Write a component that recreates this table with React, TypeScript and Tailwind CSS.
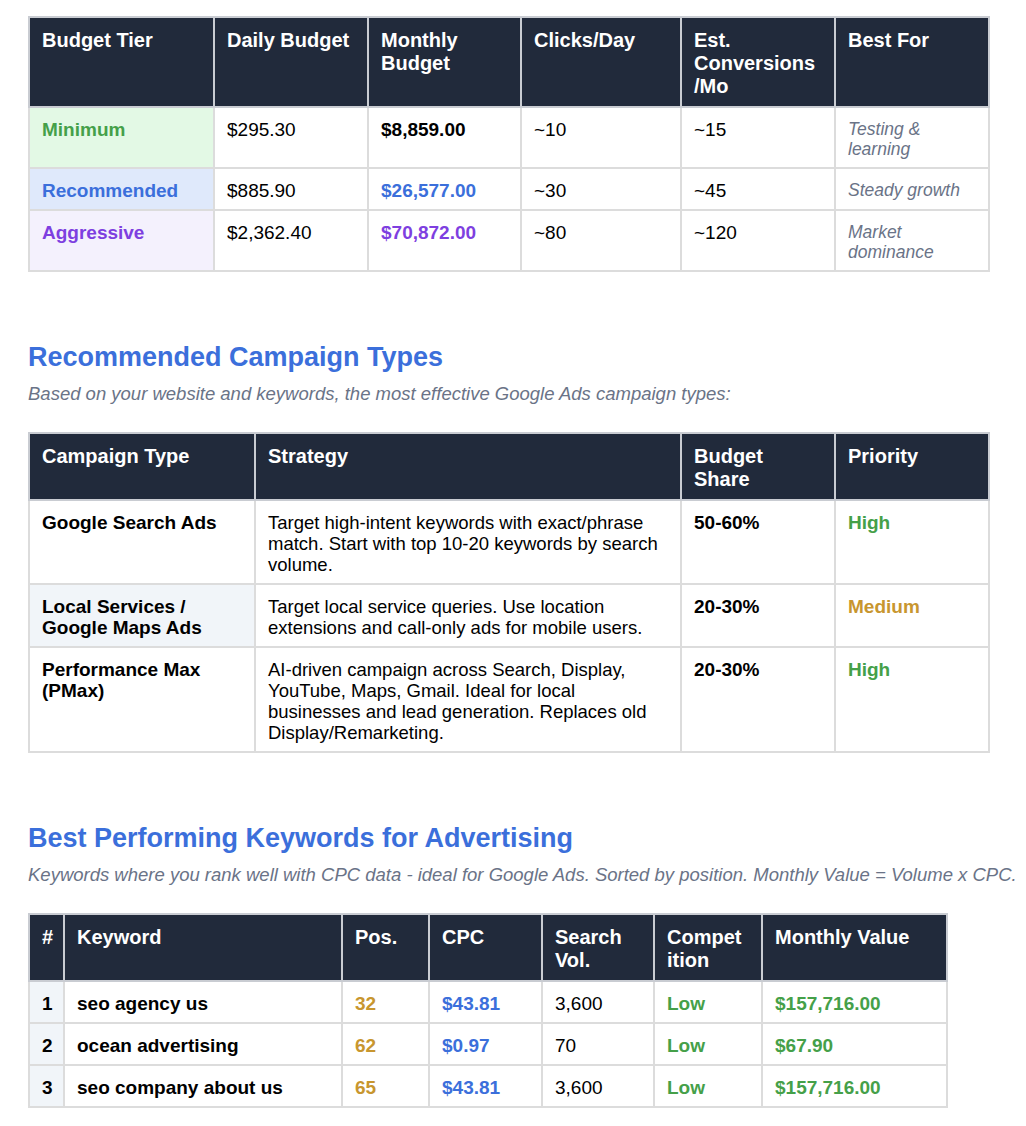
import React from 'react';

const th = 'bg-[#212a3b] text-white font-bold text-[20px] leading-[23px] text-left align-top pl-3 pr-[14px] pt-[11px] pb-[8px] border-2 border-[#c9ccd2]';
const td = 'text-[19px] leading-[21px] align-top pl-3 pr-2 pt-[11px] pb-[8px] border-2 border-[#dcdcdc]';

const tiers = [
  { name: 'Minimum', nameCls: 'text-[#45a049] bg-[#e3f9e5]', daily: '$295.30', monthly: '$8,859.00', monthlyCls: 'text-black', clicks: '~10', conv: '~15', best: 'Testing & learning' },
  { name: 'Recommended', nameCls: 'text-[#3b6fdb] bg-[#dfe9fb]', daily: '$885.90', monthly: '$26,577.00', monthlyCls: 'text-[#3b6fdb]', clicks: '~30', conv: '~45', best: 'Steady growth' },
  { name: 'Aggressive', nameCls: 'text-[#7e3fe0] bg-[#f4f1fd]', daily: '$2,362.40', monthly: '$70,872.00', monthlyCls: 'text-[#7e3fe0]', clicks: '~80', conv: '~120', best: 'Market dominance' },
];

const campaigns = [
  { type: 'Google Search Ads', strategy: 'Target high-intent keywords with exact/phrase match. Start with top 10-20 keywords by search volume.', share: '50-60%', priority: 'High', shaded: false },
  { type: 'Local Services / Google Maps Ads', strategy: 'Target local service queries. Use location extensions and call-only ads for mobile users.', share: '20-30%', priority: 'Medium', shaded: true },
  { type: 'Performance Max (PMax)', strategy: 'AI-driven campaign across Search, Display, YouTube, Maps, Gmail. Ideal for local businesses and lead generation. Replaces old Display/Remarketing.', share: '20-30%', priority: 'High', shaded: false },
];

const keywords = [
  { n: 1, kw: 'seo agency us', pos: '32', cpc: '$43.81', vol: '3,600', comp: 'Low', value: '$157,716.00' },
  { n: 2, kw: 'ocean advertising', pos: '62', cpc: '$0.97', vol: '70', comp: 'Low', value: '$67.90' },
  { n: 3, kw: 'seo company about us', pos: '65', cpc: '$43.81', vol: '3,600', comp: 'Low', value: '$157,716.00' },
];

const priorityColor: Record<string, string> = {
  High: 'text-[#45a049]',
  Medium: 'text-[#c8962f]',
};

function SectionHead({ title, sub }: { title: string; sub: string }) {
  return (
    <div className="mt-[70px] mb-[28px]">
      <h2 className="text-[27px] leading-[30px] font-bold text-[#3b6fdb]">{title}</h2>
      <p className="mt-[11px] text-[18.5px] leading-[21px] italic text-[#6a7387] whitespace-nowrap">{sub}</p>
    </div>
  );
}

export default function App() {
  return (
    <div className="min-h-screen bg-white pt-[16px] pl-[28px] text-black" style={{ fontFamily: '"Liberation Sans", Arial, sans-serif' }}>
      {/* Budget tiers */}
      <table className="table-fixed border-collapse w-[960px]">
        <colgroup>
          <col className="w-[185px]" />
          <col className="w-[154px]" />
          <col className="w-[153px]" />
          <col className="w-[160px]" />
          <col className="w-[154px]" />
          <col className="w-[154px]" />
        </colgroup>
        <thead>
          <tr>
            <th className={`${th} !pb-[9px]`}>Budget Tier</th>
            <th className={th}>Daily Budget</th>
            <th className={th}>Monthly Budget</th>
            <th className={th}>Clicks/Day</th>
            <th className={th}>Est. Conversions /Mo</th>
            <th className={th}>Best For</th>
          </tr>
        </thead>
        <tbody>
          {tiers.map((t) => (
            <tr key={t.name}>
              <td className={`${td} font-bold ${t.nameCls}`}>{t.name}</td>
              <td className={td}>{t.daily}</td>
              <td className={`${td} font-bold ${t.monthlyCls}`}>{t.monthly}</td>
              <td className={td}>{t.clicks}</td>
              <td className={td}>{t.conv}</td>
              <td className={`${td} !text-[17.5px] !leading-[20px] italic text-[#6a7387]`}>{t.best}</td>
            </tr>
          ))}
        </tbody>
      </table>

      <SectionHead
        title="Recommended Campaign Types"
        sub="Based on your website and keywords, the most effective Google Ads campaign types:"
      />

      <table className="table-fixed border-collapse w-[960px]">
        <colgroup>
          <col className="w-[226px]" />
          <col className="w-[426px]" />
          <col className="w-[154px]" />
          <col className="w-[154px]" />
        </colgroup>
        <thead>
          <tr>
            <th className={th}>Campaign Type</th>
            <th className={th}>Strategy</th>
            <th className={th}>Budget Share</th>
            <th className={th}>Priority</th>
          </tr>
        </thead>
        <tbody>
          {campaigns.map((c) => (
            <tr key={c.type}>
              <td className={`${td} font-bold ${c.shaded ? 'bg-[#f1f5f9]' : ''}`}>{c.type}</td>
              <td className={`${td} !text-[18.5px]`}>{c.strategy}</td>
              <td className={`${td} font-bold`}>{c.share}</td>
              <td className={`${td} font-bold ${priorityColor[c.priority]}`}>{c.priority}</td>
            </tr>
          ))}
        </tbody>
      </table>

      <SectionHead
        title="Best Performing Keywords for Advertising"
        sub="Keywords where you rank well with CPC data - ideal for Google Ads. Sorted by position. Monthly Value = Volume x CPC."
      />

      <table className="table-fixed border-collapse w-[918px]">
        <colgroup>
          <col className="w-[35px]" />
          <col className="w-[278px]" />
          <col className="w-[87px]" />
          <col className="w-[113px]" />
          <col className="w-[112px]" />
          <col className="w-[108px]" />
          <col className="w-[185px]" />
        </colgroup>
        <thead>
          <tr>
            <th className={`${th} !pl-[12px] !pr-0`}>#</th>
            <th className={th}>Keyword</th>
            <th className={th}>Pos.</th>
            <th className={th}>CPC</th>
            <th className={th}>Search Vol.</th>
            <th className={th}>Compet<br />ition</th>
            <th className={th}>Monthly Value</th>
          </tr>
        </thead>
        <tbody>
          {keywords.map((k) => (
            <tr key={k.n}>
              <td className={`${td} !pl-[12px] !pr-0 font-bold bg-[#f1f5f9]`}>{k.n}</td>
              <td className={`${td} font-bold`}>{k.kw}</td>
              <td className={`${td} font-bold text-[#c8962f]`}>{k.pos}</td>
              <td className={`${td} font-bold text-[#3b6fdb]`}>{k.cpc}</td>
              <td className={td}>{k.vol}</td>
              <td className={`${td} font-bold text-[#45a049]`}>{k.comp}</td>
              <td className={`${td} font-bold text-[#45a049]`}>{k.value}</td>
            </tr>
          ))}
        </tbody>
      </table>
    </div>
  );
}
